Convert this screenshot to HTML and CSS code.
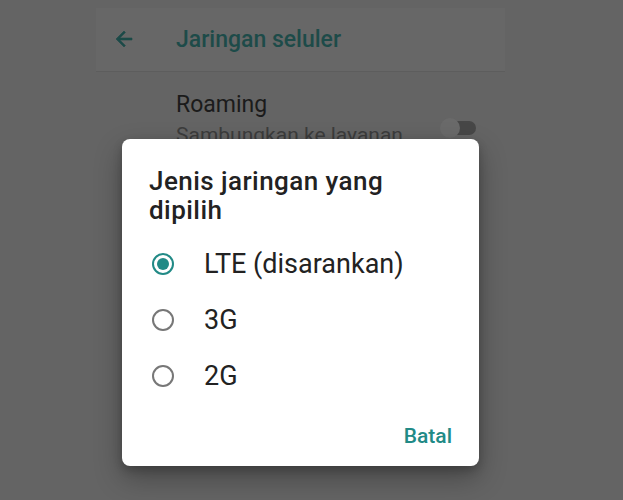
FILE: index.html
```html
<!DOCTYPE html>
<html lang="id">
<head>
<meta charset="utf-8">
<title>Jenis jaringan</title>
<link rel="stylesheet" href="styles.css">
</head>
<body>
<div class="screen">
  <header class="appbar">
    <svg class="back" width="24" height="24" viewBox="0 0 24 24"><path d="M20 11H7.83l5.59-5.59L12 4l-8 8 8 8 1.41-1.41L7.83 13H20v-2z" fill="currentColor" stroke="currentColor" stroke-width="0.6"/></svg>
    <span class="appbar-title">Jaringan seluler</span>
  </header>
  <div class="pref">
    <div class="pref-text">
      <div class="pref-title">Roaming</div>
      <div class="pref-sub">Sambungkan ke layanan</div>
    </div>
    <div class="toggle"><span class="thumb"></span></div>
  </div>
</div>

<div class="dialog">
  <h2 class="dialog-title">Jenis jaringan yang<br>dipilih</h2>
  <ul class="options">
    <li class="option"><span class="radio checked"></span><span class="label">LTE (disarankan)</span></li>
    <li class="option"><span class="radio"></span><span class="label">3G</span></li>
    <li class="option"><span class="radio"></span><span class="label">2G</span></li>
  </ul>
  <div class="actions"><button class="btn">Batal</button></div>
</div>
</body>
</html>
```
FILE: styles.css
```css
html, body {
  margin: 0;
  padding: 0;
  background: #646464;
  font-family: Roboto, "Noto Sans", sans-serif;
  height: 100%;
  overflow: hidden;
}
.screen {
  margin: 8px 0 0 96px;
  width: 409px;
}
.appbar {
  height: 63px;
  background: #676767;
  border-bottom: 1px solid #5d5d5d;
  display: flex;
  align-items: center;
  padding-left: 16px;
  gap: 40px;
  color: #1c4a48;
}
.back { display: block; margin-top: -2px; }
.appbar-title {
  font-size: 23px;
  font-weight: 500;
  color: #1d4b49;
}
.pref {
  display: flex;
  align-items: center;
  padding: 17px 29px 0 80px;
}
.pref-text { flex: 1; }
.pref-title {
  font-size: 23px;
  color: #1b1b1b;
  line-height: 32px;
}
.pref-sub {
  font-size: 21px;
  color: #3c3c3c;
  line-height: 28px;
}
.toggle {
  position: relative;
  width: 35px;
  height: 14px;
  border-radius: 7px;
  background: #474747;
  margin-top: 18px;
}
.thumb {
  position: absolute;
  left: -1px;
  top: -3px;
  width: 20px;
  height: 20px;
  border-radius: 50%;
  background: #6a6a6a;
}
.dialog {
  position: absolute;
  left: 122px;
  top: 139px;
  width: 357px;
  height: 327px;
  box-sizing: border-box;
  background: #fff;
  border-radius: 8px;
  box-shadow: 0 12px 28px rgba(0,0,0,0.3), 0 4px 10px rgba(0,0,0,0.2);
  padding: 28px 0 0 27px;
  display: flex;
  flex-direction: column;
}
.dialog-title {
  margin: 0;
  font-size: 26px;
  font-weight: 500;
  letter-spacing: 0.45px;
  line-height: 29px;
  color: #222;
}
.options {
  list-style: none;
  margin: 11px 0 0;
  padding: 0;
}
.option {
  display: flex;
  align-items: center;
  height: 56px;
}
.radio {
  box-sizing: border-box;
  width: 22px;
  height: 22px;
  border-radius: 50%;
  border: 2px solid #777;
  margin-left: 3px;
  margin-right: 30px;
  position: relative;
}
.radio.checked { border-color: #218a86; }
.radio.checked::after {
  content: "";
  position: absolute;
  left: 3px; top: 3px;
  width: 12px; height: 12px;
  border-radius: 50%;
  background: #218a86;
}
.label {
  font-size: 27px;
  color: #222;
}
.actions {
  margin-top: auto;
  display: flex;
  justify-content: flex-end;
  padding: 0 27px 18px 0;
}
.btn {
  border: 0;
  background: none;
  font-family: Roboto, sans-serif;
  font-size: 21px;
  font-weight: 500;
  color: #218a86;
  padding: 0;
}
```
